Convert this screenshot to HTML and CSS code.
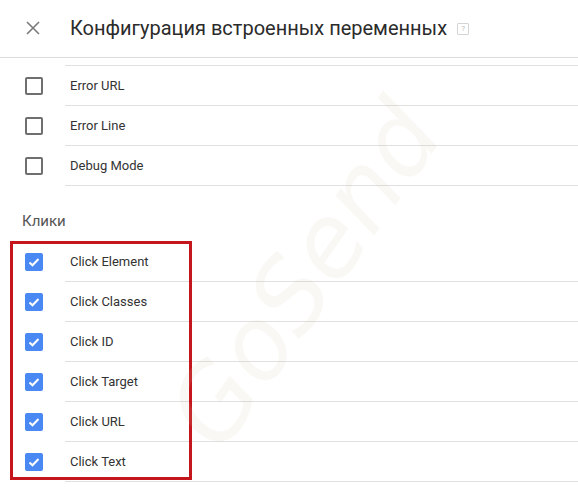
FILE: index.html
```html
<!DOCTYPE html>
<html lang="ru">
<head>
    <meta charset="UTF-8">
    <title>Конфигурация встроенных переменных</title>
    <link rel="stylesheet" href="styles.css">
</head>
<body>
<div class="page">
    <div class="header">
        <svg class="close" width="16" height="16" viewBox="0 0 16 16">
            <path d="M2 2 L14 14 M14 2 L2 14" stroke="#7a7a7a" stroke-width="1.6" fill="none"/>
        </svg>
        <h1 class="title">Конфигурация встроенных переменных</h1>
        <span class="help">?</span>
    </div>

    <div class="list list-top">
        <div class="row">
            <div class="cell-box"><span class="box"></span></div>
            <div class="cell-label">Error URL</div>
        </div>
        <div class="row">
            <div class="cell-box"><span class="box"></span></div>
            <div class="cell-label">Error Line</div>
        </div>
        <div class="row">
            <div class="cell-box"><span class="box"></span></div>
            <div class="cell-label">Debug Mode</div>
        </div>
    </div>

    <div class="section-title">Клики</div>

    <div class="list">
        <div class="row">
            <div class="cell-box"><span class="box checked"><svg viewBox="0 0 18 18"><path d="M4.5 9.5 L7.5 12.3 L13.5 6" /></svg></span></div>
            <div class="cell-label">Click Element</div>
        </div>
        <div class="row">
            <div class="cell-box"><span class="box checked"><svg viewBox="0 0 18 18"><path d="M4.5 9.5 L7.5 12.3 L13.5 6" /></svg></span></div>
            <div class="cell-label">Click Classes</div>
        </div>
        <div class="row">
            <div class="cell-box"><span class="box checked"><svg viewBox="0 0 18 18"><path d="M4.5 9.5 L7.5 12.3 L13.5 6" /></svg></span></div>
            <div class="cell-label">Click ID</div>
        </div>
        <div class="row">
            <div class="cell-box"><span class="box checked"><svg viewBox="0 0 18 18"><path d="M4.5 9.5 L7.5 12.3 L13.5 6" /></svg></span></div>
            <div class="cell-label">Click Target</div>
        </div>
        <div class="row">
            <div class="cell-box"><span class="box checked"><svg viewBox="0 0 18 18"><path d="M4.5 9.5 L7.5 12.3 L13.5 6" /></svg></span></div>
            <div class="cell-label">Click URL</div>
        </div>
        <div class="row">
            <div class="cell-box"><span class="box checked"><svg viewBox="0 0 18 18"><path d="M4.5 9.5 L7.5 12.3 L13.5 6" /></svg></span></div>
            <div class="cell-label">Click Text</div>
        </div>
    </div>

    <!-- annotation + watermark over the content -->
    <div class="highlight"></div>
    <div class="watermark">GoSend</div>
</div>
</body>
</html>
```

FILE: styles.css
```css
* {
    box-sizing: border-box;
}
html, body {
    margin: 0;
    padding: 0;
    background: #fff;
}
body {
    font-family: Roboto, "Noto Sans", Arial, sans-serif;
    color: #333;
}
.page {
    position: relative;
    height: 494px;
    overflow: hidden;
}
.header {
    display: flex;
    align-items: center;
    height: 58px;
    border-bottom: 1px solid #dcdcdc;
    padding-left: 25px;
    padding-bottom: 2px;
}
.close {
    display: block;
    margin-right: 29px;
}
.title {
    margin: 0;
    font-size: 20px;
    font-weight: 400;
    color: #2b2b2b;
}
.help {
    display: inline-flex;
    align-items: center;
    justify-content: center;
    width: 12px;
    height: 12px;
    margin-left: 10px;
    margin-top: 2px;
    border: 1px solid #d4d4d4;
    border-radius: 1px;
    font-size: 8px;
    color: #bbb;
    line-height: 1;
}
.list-top {
    margin-top: 7px;
}
.list-top .row:first-child .cell-label {
    border-top: 1px solid #e0e0e0;
}
.list-top .row:first-child {
    height: 41px;
}
.row {
    display: flex;
    height: 40px;
}
.cell-box {
    width: 65px;
    display: flex;
    align-items: center;
    padding-left: 25px;
}
.cell-label {
    flex: 1;
    display: flex;
    align-items: center;
    padding-left: 5px;
    font-size: 13px;
    color: #333;
    border-bottom: 1px solid #e0e0e0;
}
.box {
    display: block;
    width: 18px;
    height: 18px;
    border: 2px solid #6f6f6f;
    border-radius: 2px;
}
.box.checked {
    border: none;
    background: #4a89f3;
}
.box svg {
    display: block;
    width: 18px;
    height: 18px;
}
.box svg path {
    fill: none;
    stroke: #fff;
    stroke-width: 2;
}
.section-title {
    height: 56px;
    padding: 26px 0 0 22px;
    font-size: 15px;
    line-height: 18px;
    color: #555;
}
.highlight {
    position: absolute;
    left: 10px;
    top: 241px;
    width: 182px;
    height: 239px;
    border: 3px solid #c4161c;
    pointer-events: none;
}
.watermark {
    position: absolute;
    left: 110px;
    top: 225px;
    font-family: "DejaVu Sans", sans-serif;
    font-style: italic;
    font-size: 100px;
    line-height: 1;
    color: rgba(215, 195, 170, 0.12);
    transform: rotate(-55deg);
    transform-origin: center;
    pointer-events: none;
    white-space: nowrap;
}
```
